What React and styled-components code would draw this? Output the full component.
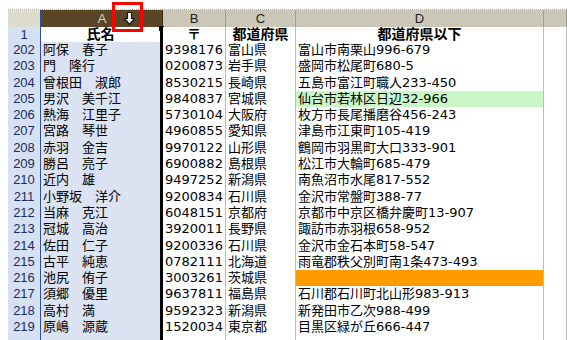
import React from "react";
import styled, { createGlobalStyle, css } from "styled-components";

const GlobalStyle = createGlobalStyle`
  html, body {
    margin: 0;
    padding: 0;
    background: #ffffff;
  }
  body {
    width: 567px;
    height: 340px;
    overflow: hidden;
  }
`;

const COLUMNS = "33px 122px 63px 70px 248px 1fr";
const ROW_HEIGHT = 16.3;

const dots = (base, dot) => css`
  background-color: ${base};
  background-image: radial-gradient(${dot} 0.7px, transparent 0.8px);
  background-size: 2px 2px;
`;

const Page = styled.div`
  padding: 9px 0 0 8px;
  font-family: "DejaVu Sans", "Noto Sans CJK JP", sans-serif;
  color: #000;
`;

const Sheet = styled.div`
  position: relative;
  display: flex;
  flex-direction: column;
`;

const HeaderRow = styled.div`
  display: grid;
  grid-template-columns: ${COLUMNS};
  height: 18px;
  border-top: 1px dotted #b0ada0;
  box-sizing: border-box;
`;

const Corner = styled.div`
  ${dots("#f2f1e8", "#dcdacb")};
  border-right: 1px solid #2c4f9e;
  border-bottom: 1px solid #8a8a80;
`;

const ColHead = styled.div`
  position: relative;
  ${({ $selected }) =>
    $selected ? dots("#3a2912", "#5c4828") : dots("#e4e1d4", "#c9c5b4")};
  color: ${({ $selected }) => ($selected ? "#d4d2cc" : "#222")};
  border-right: 1px solid ${({ $selected }) => ($selected ? "#3a2912" : "#a09e94")};
  border-bottom: 1px solid ${({ $selected }) => ($selected ? "#c8a860" : "#8a8a80")};
  font-family: "Liberation Sans", Arial, sans-serif;
  font-size: 13px;
  line-height: 17px;
  display: flex;
  justify-content: center;
  align-items: center;
  gap: 18px;
  box-sizing: border-box;
  padding-left: ${({ $selected }) => ($selected ? "30px" : "0")};
`;

const Row = styled.div`
  display: grid;
  grid-template-columns: ${COLUMNS};
  height: ${({ $title }) => ($title ? "15px" : `${ROW_HEIGHT}px`)};
  flex-shrink: 0;
`;

const RowHead = styled.div`
  ${dots("#bccfec", "#d8e2f4")};
  color: #1c2b5c;
  font-family: "Liberation Sans", Arial, sans-serif;
  font-size: 13px;
  line-height: ${({ $title }) => ($title ? "15px" : `${ROW_HEIGHT}px`)};
  text-align: center;
  border-right: 1px solid #2c4f9e;
  border-bottom: 1px solid #5d7cc0;
  box-sizing: border-box;
`;

const Cell = styled.div`
  position: relative;
  box-sizing: border-box;
  padding: 0 2px;
  font-size: ${({ $title }) => ($title ? "14px" : "13px")};
  font-weight: ${({ $title }) => ($title ? 700 : 400)};
  text-align: ${({ $title }) => ($title ? "center" : "left")};
  line-height: ${({ $title }) => ($title ? "15px" : `${ROW_HEIGHT}px`)};
  white-space: nowrap;
  overflow: hidden;
  border-right: 1px solid #bcbcbc;
  border-bottom: ${({ $title }) => ($title ? "2px dotted #3a3a3a" : "1px dotted #bdbdbd")};
  background: ${({ $bg }) => $bg || "#ffffff"};
`;

const SelCell = styled(Cell)`
  overflow: visible;
  border-right: 3px solid #000;
  border-bottom: ${({ $title }) => ($title ? "2px dotted #3a3a3a" : "1px dotted #aab8d6")};
  ${({ $title }) => ($title ? css`background: #fff;` : dots("#c3d1ea", "#dde5f4"))};
`;

const FillHandle = styled.span`
  position: absolute;
  right: -4px;
  top: -1px;
  width: 5px;
  height: 5px;
  background: #000;
`;

const Highlight = styled.div`
  position: absolute;
  left: 71px;
  top: -8px;
  width: 31px;
  height: 30px;
  border: 3px solid #ff0000;
  box-sizing: border-box;
  pointer-events: none;
  z-index: 5;
`;

const GREEN = "#c9f7c6";
const ORANGE = "#ff9b00";

const rows = [
  ["202", "阿保　春子", "9398176", "富山県", "富山市南栗山996-679"],
  ["203", "門　隆行", "0200873", "岩手県", "盛岡市松尾町680-5"],
  ["204", "曾根田　淑郎", "8530215", "長崎県", "五島市富江町職人233-450"],
  ["205", "男沢　美千江", "9840837", "宮城県", "仙台市若林区日辺32-966", GREEN],
  ["206", "熱海　江里子", "5730104", "大阪府", "枚方市長尾播磨谷456-243"],
  ["207", "宮路　琴世", "4960855", "愛知県", "津島市江東町105-419"],
  ["208", "赤羽　金吉", "9970122", "山形県", "鶴岡市羽黒町大口333-901"],
  ["209", "勝呂　亮子", "6900882", "島根県", "松江市大輪町685-479"],
  ["210", "近内　雄", "9497252", "新潟県", "南魚沼市水尾817-552"],
  ["211", "小野坂　洋介", "9200834", "石川県", "金沢市常盤町388-77"],
  ["212", "当麻　克江", "6048151", "京都府", "京都市中京区橋弁慶町13-907"],
  ["213", "冠城　高治", "3920011", "長野県", "諏訪市赤羽根658-952"],
  ["214", "佐田　仁子", "9200336", "石川県", "金沢市金石本町58-547"],
  ["215", "古平　純恵", "0782111", "北海道", "雨竜郡秩父別町南1条473-493"],
  ["216", "池尻　侑子", "3003261", "茨城県", "", ORANGE],
  ["217", "須郷　優里", "9637811", "福島県", "石川郡石川町北山形983-913"],
  ["218", "高村　満", "9592323", "新潟県", "新発田市乙次988-499"],
  ["219", "原嶋　源蔵", "1520034", "東京都", "目黒区緑が丘666-447"],
  ["", "", "", "", ""],
];

const DownArrow = () => (
  <svg width="11" height="13" viewBox="0 0 11 13">
    <path
      d="M3.5 0.5 H7.5 V6.5 H10.5 L5.5 12.5 L0.5 6.5 H3.5 Z"
      fill="#ffffff"
      stroke="#1a1a1a"
      strokeWidth="1.2"
      strokeLinejoin="round"
    />
  </svg>
);

const App = () => (
  <>
    <GlobalStyle />
    <Page>
      <Sheet>
        <HeaderRow>
          <Corner />
          <ColHead $selected>
            <span>A</span>
            <DownArrow />
            <Highlight />
          </ColHead>
          <ColHead>B</ColHead>
          <ColHead>C</ColHead>
          <ColHead>D</ColHead>
          <ColHead />
        </HeaderRow>

        <Row $title>
          <RowHead $title>1</RowHead>
          <SelCell $title>
            氏名
            <FillHandle />
          </SelCell>
          <Cell $title>〒</Cell>
          <Cell $title>都道府県</Cell>
          <Cell $title>都道府県以下</Cell>
          <Cell $title />
        </Row>

        {rows.map(([num, name, zip, pref, addr, bg], i) => (
          <Row key={i}>
            <RowHead>{num}</RowHead>
            <SelCell>{name}</SelCell>
            <Cell>{zip}</Cell>
            <Cell>{pref}</Cell>
            <Cell $bg={bg}>{addr}</Cell>
            <Cell />
          </Row>
        ))}
      </Sheet>
    </Page>
  </>
);

export default App;
